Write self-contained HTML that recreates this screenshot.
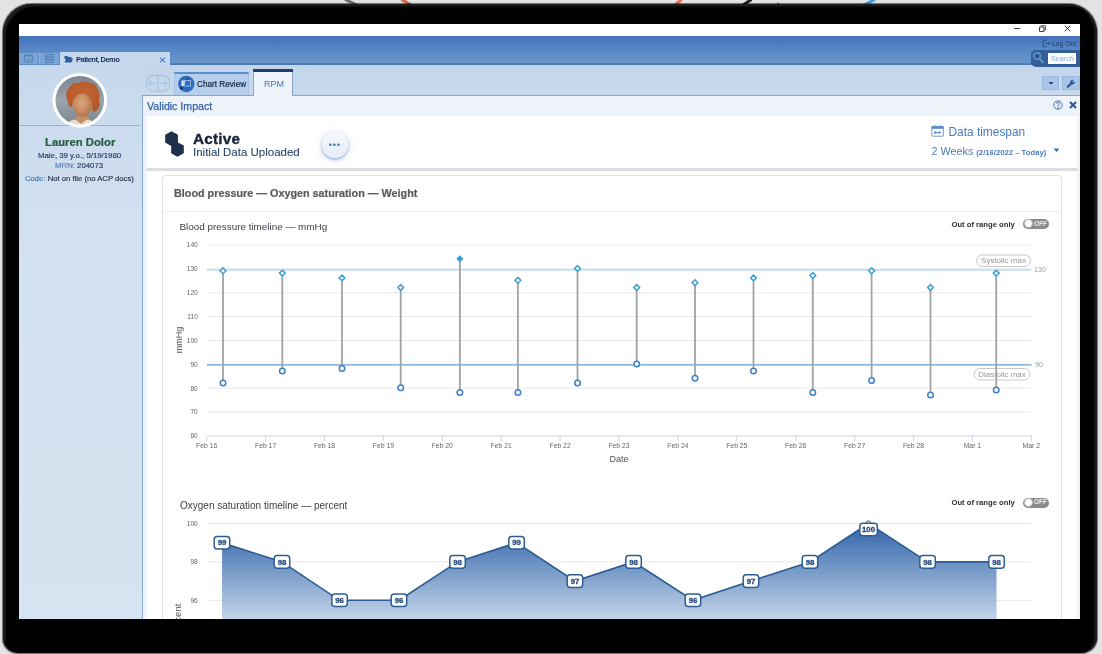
<!DOCTYPE html>
<html><head><meta charset="utf-8">
<style>
*{margin:0;padding:0;box-sizing:border-box}
html,body{width:1102px;height:654px;overflow:hidden;background:#e3e3e3;font-family:"Liberation Sans",sans-serif}
.a{position:absolute}
#frame{left:3px;top:4px;width:1094px;height:649px;background:#000;border-radius:29px 29px 16px 15px;box-shadow:0 0 0.8px 0.3px rgba(0,0,0,0.5),inset 3px 3px 1.5px -0.5px #1e1e1e,inset -3px 0 1.5px -0.5px #1e1e1e}
#screen{left:19px;top:24px;width:1061px;height:595px;background:#fff;overflow:hidden}
.t{position:absolute;white-space:nowrap;line-height:1}
</style></head><body>
<svg class="a" style="left:0;top:0" width="1102" height="8" viewBox="0 0 1102 8">
<path d="M345 -0.5L357 5" stroke="#6d6d6d" stroke-width="3"/>
<path d="M401.5 -0.5L411 5" stroke="#d9643f" stroke-width="3"/>
<path d="M681.5 -0.5L675 5" stroke="#e8703f" stroke-width="3"/>
<path d="M751.5 -0.5L743 5" stroke="#222" stroke-width="3"/>
<circle cx="778" cy="3.5" r="1" fill="#3a7bbf"/>
<path d="M875 -0.5L864 5" stroke="#3f9ee0" stroke-width="3"/>
</svg>
<div class="a" id="frame"></div>
<div class="a" id="screen"></div>
<div id="scr" style="position:absolute;left:0;top:0;width:1102px;height:654px;clip-path:inset(24px 22px 35px 19px);will-change:transform">
<!-- title bar -->
<div class="a" style="left:19px;top:24px;width:1061px;height:12px;background:#fff"></div>
<!-- blue header -->
<div class="a" style="left:19px;top:36px;width:1061px;height:29px;background:linear-gradient(#4272b9,#5b8bc8 55%,#6a97cc)"></div>
<!-- header bottom line right of patient tab -->
<div class="a" style="left:170px;top:63px;width:910px;height:2px;background:linear-gradient(#5480b8,#4a74ab)"></div>
<!-- icon tabs -->
<div class="a" style="left:19px;top:52px;width:19.5px;height:13px;background:#7ba4d6;border-top:1px solid #5f8cc8;border-right:1px solid #5f8cc8;border-bottom:1px solid #5f8cc8"></div>
<div class="a" style="left:38.5px;top:52px;width:21.5px;height:13px;background:#7ba4d6;border-top:1px solid #5f8cc8;border-left:1px solid #94b6e0;border-right:1px solid #5f8cc8;border-bottom:1px solid #5f8cc8"></div>
<svg class="a" style="left:24px;top:54px" width="9" height="9" viewBox="0 0 9 9"><rect x="0.5" y="1" width="8" height="7" rx="1" fill="none" stroke="#5783bd" stroke-width="1"/><rect x="0.5" y="1" width="8" height="1.5" fill="#5783bd"/><path d="M2.5 5.5h4" stroke="#5783bd" stroke-width="1"/></svg>
<svg class="a" style="left:44.5px;top:54px" width="9" height="9" viewBox="0 0 9 9"><rect x="0.5" y="0.5" width="8" height="8" fill="#6f98cc" stroke="#5783bd" stroke-width="1"/><path d="M0.5 3h8M0.5 5.5h8" stroke="#5783bd" stroke-width="1"/></svg>
<!-- patient tab -->
<div class="a" style="left:60px;top:52px;width:110px;height:13px;background:#c5d8ee"></div>
<svg class="a" style="left:63.5px;top:55px" width="9" height="8" viewBox="0 0 9 8"><path d="M0.5 1h3l1 1h3v2H0.5z" fill="#2d5fa5"/><path d="M0.5 7.5L2 3.5h7L7.5 7.5z" fill="#2d5fa5"/></svg>
<div class="t" style="left:76px;top:56px;font-size:7.5px;font-weight:bold;color:#1d3060;letter-spacing:-0.52px">Patient, Demo</div>
<svg class="a" style="left:159px;top:57px" width="7" height="6" viewBox="0 0 7 6"><path d="M1 0.6L6 5.4M6 0.6L1 5.4" stroke="#5083c8" stroke-width="1.2"/></svg>

<!-- sidebar -->
<div class="a" style="left:19px;top:65px;width:123px;height:554px;background:linear-gradient(#c6d8ec,#d2e1f0 28%,#d6e3f1)"></div>
<div class="a" style="left:19px;top:125px;width:121px;height:1px;background:#8fb3dc"></div>
<svg class="a" style="left:50px;top:70px" width="60" height="60" viewBox="50 70 60 60">
<defs><clipPath id="pc"><circle cx="79.8" cy="100.3" r="24.3"/></clipPath>
<linearGradient id="bg" x1="0" y1="76" x2="0" y2="125" gradientUnits="userSpaceOnUse"><stop offset="0" stop-color="#7d8690"/><stop offset="0.5" stop-color="#9aa4ae"/><stop offset="1" stop-color="#7a8590"/></linearGradient>
<radialGradient id="face" cx="0.45" cy="0.42" r="0.6"><stop offset="0" stop-color="#dba87f"/><stop offset="0.6" stop-color="#c98c61"/><stop offset="1" stop-color="#ad7249"/></radialGradient>
<radialGradient id="hr" cx="0.5" cy="0.45" r="0.55"><stop offset="0" stop-color="#c86a35"/><stop offset="1" stop-color="#b3582a"/></radialGradient>
<filter id="bl" x="-10%" y="-10%" width="120%" height="120%"><feGaussianBlur stdDeviation="0.6"/></filter>
</defs>
<circle cx="79.8" cy="100.3" r="27.4" fill="#fff"/>
<g clip-path="url(#pc)"><g filter="url(#bl)">
<rect x="50" y="70" width="60" height="60" fill="url(#bg)"/>
<path d="M67 99C65 94 67 89 70 87C71 84 75 82 79 83C82 81 87 81 90 83C94 83 97 86 98 90C100 93 100 97 99 101C101 104 99 108 97 110C95 113 92 112 92 108L91 100L73 100C73 104 72 108 70 107C68 105 68 102 67 99Z" fill="url(#hr)"/>
<path d="M77 116L88 116L92 126L73 126Z" fill="#c28e68"/>
<ellipse cx="82.3" cy="105" rx="9.6" ry="11.6" fill="url(#face)"/>
<path d="M72.5 97C75 91 80 89 86 90C90 91 92 94 92.5 97C89 93 84 92 79 93C76 94 74 95 72.5 97Z" fill="#c05f2d"/>
<path d="M66 130C67 122 71 119 76 120L81 124L86 120C91 119 95 122 97 130Z" fill="#e8dcc4"/>
</g></g></svg>


<div class="t" style="left:45px;top:137px;font-size:11.3px;font-weight:bold;color:#265a40;-webkit-text-stroke:0.2px #265a40">Lauren Dolor</div>
<div class="t" style="left:38px;top:151.5px;font-size:7.8px;color:#213a64;-webkit-text-stroke:0.15px #213a64">Male, 39 y.o., 5/19/1980</div>
<div class="t" style="left:55px;top:162px;font-size:7.8px;color:#1d3560;-webkit-text-stroke:0.12px #1d3560"><span style="color:#5d8fd0">MRN:</span> 204073</div>
<div class="t" style="left:25px;top:174.5px;font-size:7.7px;color:#18253d;-webkit-text-stroke:0.12px #18253d"><span style="color:#5d8fd0">Code:</span> Not on file (no ACP docs)</div>

<!-- second bar -->
<div class="a" style="left:142px;top:65px;width:938px;height:30px;background:linear-gradient(#c2d5eb,#c9daed)"></div>
<div class="a" style="left:142px;top:95px;width:938px;height:1px;background:#88a7cd"></div>

<!-- content panel -->
<div class="a" style="left:142px;top:95px;width:938px;height:524px;background:#eef3fa;border-left:1px solid #8aaad2;border-top:1px solid #88a7cd"></div>
<div class="t" style="left:147px;top:101px;font-size:10.6px;color:#3465aa;-webkit-text-stroke:0.25px #3465aa">Validic Impact</div>
<div class="a" style="left:147px;top:116px;width:930px;height:503px;background:#fff"></div>
<div class="a" style="left:1077px;top:116px;width:3px;height:503px;background:#eef3f7"></div>
<div class="a" style="left:147px;top:168px;width:930px;height:3px;background:#dadee3"></div>


<!-- titlebar controls -->
<div class="a" style="left:1014px;top:28px;width:6px;height:1px;background:#444"></div>
<svg class="a" style="left:1038px;top:24px" width="9" height="9" viewBox="0 0 9 9"><rect x="1.5" y="3" width="4.5" height="4.5" rx="0.8" fill="none" stroke="#444" stroke-width="1.1"/><path d="M3 3V1.7h4.5v4.5H6" fill="none" stroke="#666" stroke-width="1"/></svg>
<svg class="a" style="left:1064px;top:25px" width="7" height="7" viewBox="0 0 7 7"><path d="M0.7 0.7L6.3 6.3M6.3 0.7L0.7 6.3" stroke="#333" stroke-width="1"/></svg>
<!-- log out -->
<svg class="a" style="left:1042px;top:39px" width="9" height="9" viewBox="0 0 9 9"><path d="M4.5 1.2H1.2v6.6h3.3" fill="none" stroke="#2a4f86" stroke-width="0.9"/><path d="M3.5 4.5h4.5M6.3 3l1.5 1.5-1.5 1.5" fill="none" stroke="#2a4f86" stroke-width="0.9"/></svg>
<div class="t" style="left:1052px;top:40.5px;font-size:6.8px;color:#22426f">Log Out</div>
<!-- search -->
<div class="a" style="left:1031px;top:50px;width:49px;height:16.5px;background:#335e98;border-radius:5px 0 0 5px"></div>
<svg class="a" style="left:1031px;top:50px" width="16" height="16" viewBox="1031 50 16 16"><circle cx="1037" cy="56" r="3.3" fill="#2f5890" stroke="#6897d6" stroke-width="1.5"/><path d="M1039.5 58.6L1043.6 62.8" stroke="#6897d6" stroke-width="1.8"/></svg>
<div class="a" style="left:1048px;top:52.5px;width:28.3px;height:11.5px;background:#fff"></div>
<div class="t" style="left:1051px;top:54.5px;font-size:7.2px;color:#9fbbe3;-webkit-text-stroke:0.2px #9fbbe3">Search</div>
<!-- nav arrows -->
<svg class="a" style="left:145px;top:74px" width="27" height="19" viewBox="145 74 27 19"><rect x="146.3" y="75.4" width="23.6" height="15.8" rx="7.9" fill="none" stroke="#a3c0e4" stroke-width="1.1"/><path d="M158 75.4v15.8" stroke="#a3c0e4" stroke-width="1.1"/><path d="M148.8 83.2h7M151.8 80.2l-3 3 3 3" fill="none" stroke="#a3c0e4" stroke-width="1.1"/><path d="M160 83.2h7M164 80.2l3 3-3 3" fill="none" stroke="#a3c0e4" stroke-width="1.1"/></svg>
<!-- chart review tab -->
<div class="a" style="left:174px;top:72px;width:75px;height:23px;background:#b5ceeb;border-top:2px solid #5b8fd0;border-left:1px solid #a6c2e5;border-right:1px solid #a6c2e5"></div>
<svg class="a" style="left:176px;top:74px" width="20" height="20" viewBox="176 74 20 20"><circle cx="186.3" cy="84" r="8.2" fill="#2f6cc0"/><path d="M181.5 80.5h4l-1.2 5.5h-2.8z" fill="#e8f0fb"/><rect x="184" y="80.5" width="6.5" height="5.5" fill="none" stroke="#8fb2e0" stroke-width="1"/><path d="M186 78.8h3" stroke="#1c3f70" stroke-width="0.8"/><path d="M180.5 89l1.8-1.8" stroke="#10213a" stroke-width="2"/></svg>
<div class="t" style="left:197px;top:81px;font-size:8.2px;color:#0f1d33;-webkit-text-stroke:0.15px #0f1d33">Chart Review</div>
<!-- RPM tab -->
<div class="a" style="left:253px;top:69px;width:39.5px;height:27px;background:#eef3fa;border-left:1px solid #8aa6c8;border-right:1px solid #8aa6c8"></div>
<div class="a" style="left:253px;top:69px;width:39.5px;height:3px;background:#1f3f6e"></div>
<div class="t" style="left:264px;top:80px;font-size:9px;color:#4472b6">RPM</div>
<!-- dropdown buttons -->
<div class="a" style="left:1042px;top:76px;width:17px;height:14px;background:#a9c5e8;border:1px solid #9bbbe2"></div>
<svg class="a" style="left:1047.5px;top:82px" width="6" height="4" viewBox="0 0 6 4"><path d="M0.5 0h5L3 2.6z" fill="#253a60"/></svg>
<div class="a" style="left:1062px;top:76px;width:18px;height:14px;background:#a9c5e8;border:1px solid #9bbbe2"></div>
<svg class="a" style="left:1066px;top:79px" width="10" height="10" viewBox="0 0 10 10"><path d="M1.8 7.8L5 4.6" stroke="#2c5590" stroke-width="2.2" stroke-linecap="round"/><path d="M4.2 3.6a2.5 2.5 0 0 1 3.4-2.6L6.3 2.6l0.9 1 1.5-1.3a2.5 2.5 0 0 1-3 3.2z" fill="#2c5590"/></svg>
<!-- help / close -->
<svg class="a" style="left:1053px;top:100px" width="10" height="10" viewBox="0 0 10 10"><path d="M5 0.8C7.5 0.8 9.2 2.8 9.2 5S7.5 9.2 5 9.2 0.8 7.2 0.8 5 2.5 0.8 5 0.8z" fill="none" stroke="#3d6cae" stroke-width="0.9"/><path d="M3.6 3.6a1.4 1.4 0 1 1 1.9 1.3c-0.4 0.2-0.5 0.4-0.5 0.9v0.6" fill="none" stroke="#2c5a9a" stroke-width="1"/><path d="M5 7.3v1.8" stroke="#2c5a9a" stroke-width="1"/></svg>
<svg class="a" style="left:1069px;top:101px" width="8" height="8" viewBox="0 0 8 8"><path d="M1 1L7 7M7 1L1 7" stroke="#2a5590" stroke-width="2"/></svg>
<!-- active section -->
<svg class="a" style="left:160px;top:125px" width="30" height="36" viewBox="160 125 30 36"><path d="M165.2 134.8L171.6 131.3L177.9 134.8V142.4L183.8 145.6V153.2L177.4 156.7L171.2 153.2V145.9L165.2 142.5Z" fill="#1c2f4b"/></svg>
<div class="t" style="left:193px;top:131px;font-size:15.3px;font-weight:bold;color:#15233a;letter-spacing:0.2px;-webkit-text-stroke:0.35px #15233a">Active</div>
<div class="t" style="left:193px;top:147px;font-size:11.5px;color:#2c4870;-webkit-text-stroke:0.12px #2c4870">Initial Data Uploaded</div>
<div class="a" style="left:321.5px;top:131.5px;width:26px;height:26px;border-radius:50%;background:linear-gradient(#f5f8fc,#e5ecf7);box-shadow:0 1.5px 3px rgba(60,110,195,0.5),0 1px 9px rgba(110,150,215,0.3)"></div>
<svg class="a" style="left:326px;top:142px" width="16" height="5" viewBox="326 142 16 5"><circle cx="330.3" cy="144.7" r="1.25" fill="#3d70bd"/><circle cx="334.4" cy="144.7" r="1.25" fill="#3d70bd"/><circle cx="338.5" cy="144.7" r="1.25" fill="#3d70bd"/></svg>
<!-- data timespan -->
<svg class="a" style="left:930px;top:123px" width="16" height="15" viewBox="930 123 16 15"><rect x="931.9" y="126.5" width="11.4" height="9.7" rx="0.8" fill="none" stroke="#6d98d6" stroke-width="1"/><rect x="931.6" y="126" width="12" height="2.8" fill="#5b8bd0"/><path d="M934.8 124.8v1.6M940.4 124.8v1.6" stroke="#7aa2da" stroke-width="1.1"/><path d="M935.2 132.6h4.4" stroke="#4f84cc" stroke-width="1"/><circle cx="935.2" cy="132.6" r="1.2" fill="#4f84cc"/><circle cx="939.6" cy="132.6" r="1.2" fill="#4f84cc"/></svg>
<div class="t" style="left:948.5px;top:127.2px;font-size:11.9px;color:#4a7cc1">Data timespan</div>
<div class="t" style="left:931.5px;top:145.5px;font-size:10.8px;color:#4a7cc1">2 Weeks <span style="font-size:7.7px;font-weight:bold">(2/16/2022 – Today)</span></div>
<svg class="a" style="left:1053px;top:148px" width="7" height="5" viewBox="0 0 7 5"><path d="M0.5 0.5h6L3.5 4z" fill="#3d6fb8"/></svg>
<!-- chart card -->
<div class="a" style="left:162px;top:175px;width:900px;height:460px;border:1px solid #dfe1e4;border-radius:4px;background:#fff"></div>
<div class="a" style="left:163px;top:211px;width:898px;height:1px;background:#eceef0"></div>
<div class="t" style="left:174px;top:188px;font-size:10.8px;font-weight:bold;color:#5a5a5a;-webkit-text-stroke:0.2px #5a5a5a">Blood pressure — Oxygen saturation — Weight</div>
<!--CHART--><svg class="a" style="left:0;top:0" width="1102" height="654" viewBox="0 0 1102 654">
<g font-family="Liberation Sans" >
<text x="179.5" y="229.8" font-size="9.9" fill="#3d4148">Blood pressure timeline — mmHg</text>
<text x="951.5" y="226.5" font-size="7.65" font-weight="bold" fill="#2a2e35">Out of range only</text>
<text x="951.5" y="505" font-size="7.65" font-weight="bold" fill="#2a2e35">Out of range only</text>
<line x1="207" y1="412.1" x2="1031.5" y2="412.1" stroke="#e9e9e9" stroke-width="1"/>
<text x="197.8" y="414.4" font-size="6.6" fill="#666" text-anchor="end">70</text>
<line x1="207" y1="388.2" x2="1031.5" y2="388.2" stroke="#e9e9e9" stroke-width="1"/>
<text x="197.8" y="390.6" font-size="6.6" fill="#666" text-anchor="end">80</text>
<line x1="207" y1="364.4" x2="1031.5" y2="364.4" stroke="#e9e9e9" stroke-width="1"/>
<text x="197.8" y="366.7" font-size="6.6" fill="#666" text-anchor="end">90</text>
<line x1="207" y1="340.5" x2="1031.5" y2="340.5" stroke="#e9e9e9" stroke-width="1"/>
<text x="197.8" y="342.8" font-size="6.6" fill="#666" text-anchor="end">100</text>
<line x1="207" y1="316.6" x2="1031.5" y2="316.6" stroke="#e9e9e9" stroke-width="1"/>
<text x="197.8" y="318.9" font-size="6.6" fill="#666" text-anchor="end">110</text>
<line x1="207" y1="292.8" x2="1031.5" y2="292.8" stroke="#e9e9e9" stroke-width="1"/>
<text x="197.8" y="295.1" font-size="6.6" fill="#666" text-anchor="end">120</text>
<line x1="207" y1="268.9" x2="1031.5" y2="268.9" stroke="#e9e9e9" stroke-width="1"/>
<text x="197.8" y="271.2" font-size="6.6" fill="#666" text-anchor="end">130</text>
<line x1="207" y1="245.0" x2="1031.5" y2="245.0" stroke="#e9e9e9" stroke-width="1"/>
<text x="197.8" y="247.3" font-size="6.6" fill="#666" text-anchor="end">140</text>
<text x="197.8" y="438.3" font-size="6.6" fill="#666" text-anchor="end">60</text>
<line x1="207" y1="436" x2="1031.5" y2="436" stroke="#ccd6e6" stroke-width="1"/>
<line x1="206.7" y1="436" x2="206.7" y2="441" stroke="#ccd6e6" stroke-width="1"/>
<text x="206.7" y="447.5" font-size="6.8" fill="#666" text-anchor="middle">Feb 16</text>
<line x1="265.6" y1="436" x2="265.6" y2="441" stroke="#ccd6e6" stroke-width="1"/>
<text x="265.6" y="447.5" font-size="6.8" fill="#666" text-anchor="middle">Feb 17</text>
<line x1="324.5" y1="436" x2="324.5" y2="441" stroke="#ccd6e6" stroke-width="1"/>
<text x="324.5" y="447.5" font-size="6.8" fill="#666" text-anchor="middle">Feb 18</text>
<line x1="383.4" y1="436" x2="383.4" y2="441" stroke="#ccd6e6" stroke-width="1"/>
<text x="383.4" y="447.5" font-size="6.8" fill="#666" text-anchor="middle">Feb 19</text>
<line x1="442.3" y1="436" x2="442.3" y2="441" stroke="#ccd6e6" stroke-width="1"/>
<text x="442.3" y="447.5" font-size="6.8" fill="#666" text-anchor="middle">Feb 20</text>
<line x1="501.2" y1="436" x2="501.2" y2="441" stroke="#ccd6e6" stroke-width="1"/>
<text x="501.2" y="447.5" font-size="6.8" fill="#666" text-anchor="middle">Feb 21</text>
<line x1="560.1" y1="436" x2="560.1" y2="441" stroke="#ccd6e6" stroke-width="1"/>
<text x="560.1" y="447.5" font-size="6.8" fill="#666" text-anchor="middle">Feb 22</text>
<line x1="619.0" y1="436" x2="619.0" y2="441" stroke="#ccd6e6" stroke-width="1"/>
<text x="619.0" y="447.5" font-size="6.8" fill="#666" text-anchor="middle">Feb 23</text>
<line x1="677.9" y1="436" x2="677.9" y2="441" stroke="#ccd6e6" stroke-width="1"/>
<text x="677.9" y="447.5" font-size="6.8" fill="#666" text-anchor="middle">Feb 24</text>
<line x1="736.8" y1="436" x2="736.8" y2="441" stroke="#ccd6e6" stroke-width="1"/>
<text x="736.8" y="447.5" font-size="6.8" fill="#666" text-anchor="middle">Feb 25</text>
<line x1="795.7" y1="436" x2="795.7" y2="441" stroke="#ccd6e6" stroke-width="1"/>
<text x="795.7" y="447.5" font-size="6.8" fill="#666" text-anchor="middle">Feb 26</text>
<line x1="854.6" y1="436" x2="854.6" y2="441" stroke="#ccd6e6" stroke-width="1"/>
<text x="854.6" y="447.5" font-size="6.8" fill="#666" text-anchor="middle">Feb 27</text>
<line x1="913.5" y1="436" x2="913.5" y2="441" stroke="#ccd6e6" stroke-width="1"/>
<text x="913.5" y="447.5" font-size="6.8" fill="#666" text-anchor="middle">Feb 28</text>
<line x1="972.4" y1="436" x2="972.4" y2="441" stroke="#ccd6e6" stroke-width="1"/>
<text x="972.4" y="447.5" font-size="6.8" fill="#666" text-anchor="middle">Mar 1</text>
<line x1="1031.3" y1="436" x2="1031.3" y2="441" stroke="#ccd6e6" stroke-width="1"/>
<text x="1031.3" y="447.5" font-size="6.8" fill="#666" text-anchor="middle">Mar 2</text>
<text x="619" y="462" font-size="9" fill="#555" text-anchor="middle">Date</text>
<text transform="translate(181.5,340) rotate(-90)" font-size="9" fill="#555" text-anchor="middle">mmHg</text>
<line x1="207" y1="269.9" x2="1031.5" y2="269.9" stroke="#bfe1ee" stroke-width="1.9"/>
<line x1="207" y1="364.85" x2="1031.5" y2="364.85" stroke="#8fb9e0" stroke-width="1.9"/>
<text x="1034" y="272.3" font-size="7.2" fill="#a0a0a0">130</text>
<text x="1035" y="367.2" font-size="7.2" fill="#a0a0a0">90</text>
<rect x="976.5" y="255" width="54" height="11.5" rx="5.75" fill="#fff" stroke="#c8c8c8" stroke-width="1"/>
<text x="1003.5" y="263.3" font-size="8" fill="#999" text-anchor="middle">Systolic max</text>
<rect x="974" y="368.5" width="56" height="11.5" rx="5.75" fill="#fff" stroke="#c8c8c8" stroke-width="1"/>
<text x="1002" y="376.8" font-size="8" fill="#999" text-anchor="middle">Diastolic max</text>
<line x1="223" y1="270.8" x2="223" y2="383.0" stroke="#a2a2a2" stroke-width="1.8"/>
<line x1="282.3" y1="273.1" x2="282.3" y2="371.0" stroke="#a2a2a2" stroke-width="1.8"/>
<line x1="342" y1="277.9" x2="342" y2="368.6" stroke="#a2a2a2" stroke-width="1.8"/>
<line x1="400.7" y1="287.5" x2="400.7" y2="387.8" stroke="#a2a2a2" stroke-width="1.8"/>
<line x1="459.9" y1="258.8" x2="459.9" y2="392.5" stroke="#a2a2a2" stroke-width="1.8"/>
<line x1="517.9" y1="280.3" x2="517.9" y2="392.5" stroke="#a2a2a2" stroke-width="1.8"/>
<line x1="577.5" y1="268.4" x2="577.5" y2="383.0" stroke="#a2a2a2" stroke-width="1.8"/>
<line x1="636.7" y1="287.5" x2="636.7" y2="363.9" stroke="#a2a2a2" stroke-width="1.8"/>
<line x1="695" y1="282.7" x2="695" y2="378.2" stroke="#a2a2a2" stroke-width="1.8"/>
<line x1="753.5" y1="277.9" x2="753.5" y2="371.0" stroke="#a2a2a2" stroke-width="1.8"/>
<line x1="812.8" y1="275.5" x2="812.8" y2="392.5" stroke="#a2a2a2" stroke-width="1.8"/>
<line x1="871.6" y1="270.8" x2="871.6" y2="380.6" stroke="#a2a2a2" stroke-width="1.8"/>
<line x1="930.5" y1="287.5" x2="930.5" y2="394.9" stroke="#a2a2a2" stroke-width="1.8"/>
<line x1="996.2" y1="273.1" x2="996.2" y2="390.1" stroke="#a2a2a2" stroke-width="1.8"/>
<circle cx="223" cy="383.0" r="2.75" fill="#fff" stroke="#3f7ec9" stroke-width="1.5"/>
<path d="M223 267.9L225.9 270.8L223 273.7L220.1 270.8Z" fill="#fff" stroke="#3aa0d6" stroke-width="1.5"/>
<circle cx="282.3" cy="371.0" r="2.75" fill="#fff" stroke="#3f7ec9" stroke-width="1.5"/>
<path d="M282.3 270.2L285.2 273.1L282.3 276.0L279.40000000000003 273.1Z" fill="#fff" stroke="#3aa0d6" stroke-width="1.5"/>
<circle cx="342" cy="368.6" r="2.75" fill="#fff" stroke="#3f7ec9" stroke-width="1.5"/>
<path d="M342 275.0L344.9 277.9L342 280.8L339.1 277.9Z" fill="#fff" stroke="#3aa0d6" stroke-width="1.5"/>
<circle cx="400.7" cy="387.8" r="2.75" fill="#fff" stroke="#3f7ec9" stroke-width="1.5"/>
<path d="M400.7 284.6L403.59999999999997 287.5L400.7 290.4L397.8 287.5Z" fill="#fff" stroke="#3aa0d6" stroke-width="1.5"/>
<circle cx="459.9" cy="392.5" r="2.75" fill="#fff" stroke="#3f7ec9" stroke-width="1.5"/>
<path d="M459.9 255.2L463.5 258.8L459.9 262.4L456.29999999999995 258.8Z" fill="#3aa0d6"/>
<circle cx="517.9" cy="392.5" r="2.75" fill="#fff" stroke="#3f7ec9" stroke-width="1.5"/>
<path d="M517.9 277.4L520.8 280.3L517.9 283.2L515.0 280.3Z" fill="#fff" stroke="#3aa0d6" stroke-width="1.5"/>
<circle cx="577.5" cy="383.0" r="2.75" fill="#fff" stroke="#3f7ec9" stroke-width="1.5"/>
<path d="M577.5 265.5L580.4 268.4L577.5 271.3L574.6 268.4Z" fill="#fff" stroke="#3aa0d6" stroke-width="1.5"/>
<circle cx="636.7" cy="363.9" r="2.75" fill="#fff" stroke="#3f7ec9" stroke-width="1.5"/>
<path d="M636.7 284.6L639.6 287.5L636.7 290.4L633.8000000000001 287.5Z" fill="#fff" stroke="#3aa0d6" stroke-width="1.5"/>
<circle cx="695" cy="378.2" r="2.75" fill="#fff" stroke="#3f7ec9" stroke-width="1.5"/>
<path d="M695 279.8L697.9 282.7L695 285.6L692.1 282.7Z" fill="#fff" stroke="#3aa0d6" stroke-width="1.5"/>
<circle cx="753.5" cy="371.0" r="2.75" fill="#fff" stroke="#3f7ec9" stroke-width="1.5"/>
<path d="M753.5 275.0L756.4 277.9L753.5 280.8L750.6 277.9Z" fill="#fff" stroke="#3aa0d6" stroke-width="1.5"/>
<circle cx="812.8" cy="392.5" r="2.75" fill="#fff" stroke="#3f7ec9" stroke-width="1.5"/>
<path d="M812.8 272.6L815.6999999999999 275.5L812.8 278.4L809.9 275.5Z" fill="#fff" stroke="#3aa0d6" stroke-width="1.5"/>
<circle cx="871.6" cy="380.6" r="2.75" fill="#fff" stroke="#3f7ec9" stroke-width="1.5"/>
<path d="M871.6 267.9L874.5 270.8L871.6 273.7L868.7 270.8Z" fill="#fff" stroke="#3aa0d6" stroke-width="1.5"/>
<circle cx="930.5" cy="394.9" r="2.75" fill="#fff" stroke="#3f7ec9" stroke-width="1.5"/>
<path d="M930.5 284.6L933.4 287.5L930.5 290.4L927.6 287.5Z" fill="#fff" stroke="#3aa0d6" stroke-width="1.5"/>
<circle cx="996.2" cy="390.1" r="2.75" fill="#fff" stroke="#3f7ec9" stroke-width="1.5"/>
<path d="M996.2 270.2L999.1 273.1L996.2 276.0L993.3000000000001 273.1Z" fill="#fff" stroke="#3aa0d6" stroke-width="1.5"/>
<text x="180" y="509" font-size="10" fill="#3d4148">Oxygen saturation timeline — percent</text>
<line x1="207" y1="523.5" x2="1031.5" y2="523.5" stroke="#e9e9e9" stroke-width="1"/>
<text x="197.8" y="525.8" font-size="6.6" fill="#666" text-anchor="end">100</text>
<line x1="207" y1="561.9" x2="1031.5" y2="561.9" stroke="#e9e9e9" stroke-width="1"/>
<text x="197.8" y="564.2" font-size="6.6" fill="#666" text-anchor="end">98</text>
<line x1="207" y1="600.3" x2="1031.5" y2="600.3" stroke="#e9e9e9" stroke-width="1"/>
<text x="197.8" y="602.6" font-size="6.6" fill="#666" text-anchor="end">96</text>
<text transform="translate(180.8,603.7) rotate(-90)" font-size="9.5" fill="#555" text-anchor="end">percent</text>
<defs><linearGradient id="ag" x1="0" y1="523" x2="0" y2="630" gradientUnits="userSpaceOnUse"><stop offset="0" stop-color="#2f63a8"/><stop offset="1" stop-color="#d3e0f0"/></linearGradient></defs>
<polygon points="222,660 222,542.7 282,561.9 339.5,600.3 399,600.3 457.5,561.9 516.5,542.7 575,581.1 633.5,561.9 693,600.3 751,581.1 810,561.9 868.5,523.5 927.5,561.9 996.5,561.9 996.5,660" fill="url(#ag)"/>
<polyline points="222,542.7 282,561.9 339.5,600.3 399,600.3 457.5,561.9 516.5,542.7 575,581.1 633.5,561.9 693,600.3 751,581.1 810,561.9 868.5,523.5 927.5,561.9 996.5,561.9" fill="none" stroke="#2a5b93" stroke-width="1.6"/>
<rect x="214.2" y="536.4" width="15.5" height="12.6" rx="3" fill="#fff" stroke="#2d5d95" stroke-width="1.5"/>
<text x="222" y="545.3" font-size="7.8" font-weight="bold" fill="#2d4f80" stroke="#2d4f80" stroke-width="0.35" text-anchor="middle">99</text>
<rect x="274.2" y="555.6" width="15.5" height="12.6" rx="3" fill="#fff" stroke="#2d5d95" stroke-width="1.5"/>
<text x="282" y="564.5" font-size="7.8" font-weight="bold" fill="#2d4f80" stroke="#2d4f80" stroke-width="0.35" text-anchor="middle">98</text>
<rect x="331.8" y="594.0" width="15.5" height="12.6" rx="3" fill="#fff" stroke="#2d5d95" stroke-width="1.5"/>
<text x="339.5" y="602.9" font-size="7.8" font-weight="bold" fill="#2d4f80" stroke="#2d4f80" stroke-width="0.35" text-anchor="middle">96</text>
<rect x="391.2" y="594.0" width="15.5" height="12.6" rx="3" fill="#fff" stroke="#2d5d95" stroke-width="1.5"/>
<text x="399" y="602.9" font-size="7.8" font-weight="bold" fill="#2d4f80" stroke="#2d4f80" stroke-width="0.35" text-anchor="middle">96</text>
<rect x="449.8" y="555.6" width="15.5" height="12.6" rx="3" fill="#fff" stroke="#2d5d95" stroke-width="1.5"/>
<text x="457.5" y="564.5" font-size="7.8" font-weight="bold" fill="#2d4f80" stroke="#2d4f80" stroke-width="0.35" text-anchor="middle">98</text>
<rect x="508.8" y="536.4" width="15.5" height="12.6" rx="3" fill="#fff" stroke="#2d5d95" stroke-width="1.5"/>
<text x="516.5" y="545.3" font-size="7.8" font-weight="bold" fill="#2d4f80" stroke="#2d4f80" stroke-width="0.35" text-anchor="middle">99</text>
<rect x="567.2" y="574.8" width="15.5" height="12.6" rx="3" fill="#fff" stroke="#2d5d95" stroke-width="1.5"/>
<text x="575" y="583.7" font-size="7.8" font-weight="bold" fill="#2d4f80" stroke="#2d4f80" stroke-width="0.35" text-anchor="middle">97</text>
<rect x="625.8" y="555.6" width="15.5" height="12.6" rx="3" fill="#fff" stroke="#2d5d95" stroke-width="1.5"/>
<text x="633.5" y="564.5" font-size="7.8" font-weight="bold" fill="#2d4f80" stroke="#2d4f80" stroke-width="0.35" text-anchor="middle">98</text>
<rect x="685.2" y="594.0" width="15.5" height="12.6" rx="3" fill="#fff" stroke="#2d5d95" stroke-width="1.5"/>
<text x="693" y="602.9" font-size="7.8" font-weight="bold" fill="#2d4f80" stroke="#2d4f80" stroke-width="0.35" text-anchor="middle">96</text>
<rect x="743.2" y="574.8" width="15.5" height="12.6" rx="3" fill="#fff" stroke="#2d5d95" stroke-width="1.5"/>
<text x="751" y="583.7" font-size="7.8" font-weight="bold" fill="#2d4f80" stroke="#2d4f80" stroke-width="0.35" text-anchor="middle">97</text>
<rect x="802.2" y="555.6" width="15.5" height="12.6" rx="3" fill="#fff" stroke="#2d5d95" stroke-width="1.5"/>
<text x="810" y="564.5" font-size="7.8" font-weight="bold" fill="#2d4f80" stroke="#2d4f80" stroke-width="0.35" text-anchor="middle">98</text>
<circle cx="868.5" cy="523.0" r="2.2" fill="#fff" stroke="#2d5d95" stroke-width="1"/>
<rect x="859.8" y="523.2" width="17.5" height="12.6" rx="3" fill="#fff" stroke="#2d5d95" stroke-width="1.5"/>
<text x="868.5" y="532.1" font-size="7.8" font-weight="bold" fill="#2d4f80" stroke="#2d4f80" stroke-width="0.35" text-anchor="middle">100</text>
<rect x="919.8" y="555.6" width="15.5" height="12.6" rx="3" fill="#fff" stroke="#2d5d95" stroke-width="1.5"/>
<text x="927.5" y="564.5" font-size="7.8" font-weight="bold" fill="#2d4f80" stroke="#2d4f80" stroke-width="0.35" text-anchor="middle">98</text>
<rect x="988.8" y="555.6" width="15.5" height="12.6" rx="3" fill="#fff" stroke="#2d5d95" stroke-width="1.5"/>
<text x="996.5" y="564.5" font-size="7.8" font-weight="bold" fill="#2d4f80" stroke="#2d4f80" stroke-width="0.35" text-anchor="middle">98</text>
</g></svg>
<div class="a" style="left:1023px;top:218.8px;width:26px;height:10px;border-radius:5px;background:#8a8a8a"></div>
<div class="a" style="left:1023.5px;top:219.3px;width:9px;height:9px;border-radius:50%;background:#fff;border:1px solid #bbb"></div>
<div class="t" style="left:1034px;top:220.60000000000002px;font-size:6.5px;font-weight:bold;color:#eee">OFF</div>
<div class="a" style="left:1023px;top:497.5px;width:26px;height:10px;border-radius:5px;background:#8a8a8a"></div>
<div class="a" style="left:1023.5px;top:498.0px;width:9px;height:9px;border-radius:50%;background:#fff;border:1px solid #bbb"></div>
<div class="t" style="left:1034px;top:499.3px;font-size:6.5px;font-weight:bold;color:#eee">OFF</div><!--/CHART-->
</div>
</body></html>
